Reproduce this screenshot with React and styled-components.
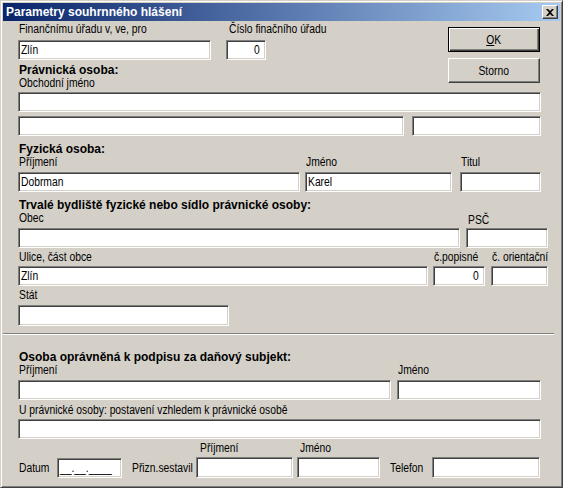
import React from "react";
import styled, { createGlobalStyle } from "styled-components";

const GlobalStyle = createGlobalStyle`
  body {
    margin: 0;
    background: #d4d0c8;
  }
`;

const uiFont = `"Liberation Sans", Arial, sans-serif`;

const Window = styled.div`
  width: 563px;
  height: 488px;
  box-sizing: border-box;
  background: #d4d0c8;
  border-top: 1px solid #d4d0c8;
  border-left: 1px solid #d4d0c8;
  border-right: 1px solid #404040;
  border-bottom: 1px solid #404040;
  box-shadow: inset 1px 1px #ffffff, inset -1px -1px #808080;
  padding: 2px;
  font-family: ${uiFont};
  font-size: 12px;
  color: #000;
  overflow: hidden;
`;

// narrow UI text (Arial Narrow look)
const Txt = styled.span`
  display: inline-block;
  white-space: nowrap;
  transform: scaleX(0.86);
  transform-origin: ${(p) => (p.$right ? "right" : p.$center ? "center" : "left")} center;
`;

const TitleBar = styled.div`
  height: 18px;
  display: flex;
  align-items: center;
  justify-content: space-between;
  padding: 0 2px 0 3px;
  background: linear-gradient(to right, #0a246a, #a6caf0);
`;

const TitleText = styled.span`
  font-weight: bold;
  font-size: 12px;
  color: #fff;
`;

const CloseBtn = styled.div`
  width: 16px;
  height: 14px;
  box-sizing: border-box;
  background: #d4d0c8;
  border-top: 1px solid #fff;
  border-left: 1px solid #fff;
  border-right: 1px solid #404040;
  border-bottom: 1px solid #404040;
  box-shadow: inset -1px -1px #808080;
  display: flex;
  align-items: center;
  justify-content: center;
`;

const Body = styled.div`
  padding: 1px 0 0 15px;
`;

const Top = styled.div`
  display: flex;
`;

const TopLeft = styled.div`
  width: 430px;
`;

const Buttons = styled.div`
  display: flex;
  flex-direction: column;
  gap: 6px;
  padding-top: 5px;
`;

const Button = styled.div`
  width: 92px;
  height: 25px;
  box-sizing: border-box;
  display: flex;
  align-items: center;
  justify-content: center;
  border-top: 1px solid ${(p) => (p.$default ? "#000" : "#fff")};
  border-left: 1px solid ${(p) => (p.$default ? "#000" : "#fff")};
  border-right: 1px solid ${(p) => (p.$default ? "#000" : "#404040")};
  border-bottom: 1px solid ${(p) => (p.$default ? "#000" : "#404040")};
  box-shadow: ${(p) =>
    p.$default
      ? "inset 1px 1px #fff, inset -1px -1px #404040, inset -2px -2px #808080"
      : "inset -1px -1px #808080"};
  u {
    text-decoration: underline;
  }
`;

const Row = styled.div`
  display: flex;
  align-items: ${(p) => p.$align || "flex-start"};
  margin-top: ${(p) => p.$mt || 0}px;
`;

const Field = styled.div`
  display: flex;
  flex-direction: column;
  width: ${(p) => p.$w}px;
  margin-left: ${(p) => p.$ml || 0}px;
  margin-top: ${(p) => p.$mt || 0}px;
`;

const Label = styled.div`
  height: 13px;
  line-height: 13px;
  white-space: nowrap;
  padding-left: ${(p) => p.$pl || 1}px;
  margin-bottom: ${(p) => (p.$mb === undefined ? 4 : p.$mb)}px;
`;

const Heading = styled.div`
  font-weight: bold;
  font-size: 12px;
  height: 13px;
  line-height: 13px;
  padding-left: 1px;
  white-space: nowrap;
  margin-top: ${(p) => p.$mt || 0}px;
`;

const Input = styled.div`
  width: ${(p) => (p.$w ? `${p.$w}px` : "100%")};
  height: ${(p) => p.$h || 20}px;
  flex-shrink: 0;
  box-sizing: border-box;
  background: #fff;
  border-top: 1px solid #808080;
  border-left: 1px solid #808080;
  border-right: 1px solid #fff;
  border-bottom: 1px solid #fff;
  box-shadow: inset 1px 1px #404040, inset -1px -1px #d4d0c8;
  padding: 0 5px 0 2px;
  display: flex;
  align-items: center;
  justify-content: ${(p) => (p.$right ? "flex-end" : "flex-start")};
  margin-left: ${(p) => p.$ml || 0}px;
  white-space: nowrap;
  overflow: hidden;
`;

const Separator = styled.div`
  height: 0;
  margin: 7px 0 0 -15px;
  width: 551px;
  border-top: 1px solid #808080;
  border-bottom: 1px solid #fff;
`;

const InlineLabel = styled.span`
  width: ${(p) => p.$w}px;
  flex-shrink: 0;
  box-sizing: border-box;
  padding-left: ${(p) => p.$pl || 1}px;
  padding-bottom: 3px;
  white-space: nowrap;
`;

export default function App() {
  return (
    <>
      <GlobalStyle />
      <Window>
        <TitleBar>
          <TitleText>Parametry souhrnného hlášení</TitleText>
          <CloseBtn>
            <svg width="8" height="7" viewBox="0 0 8 7">
              <path d="M0 0h2l2 2 2-2h2L5 3.5 8 7H6L4 5 2 7H0l3-3.5z" fill="#000" />
            </svg>
          </CloseBtn>
        </TitleBar>
        <Body>
          <Top>
            <TopLeft>
              <Row $mt={1}>
                <Field $w={193}>
                  <Label><Txt>Finančnímu úřadu v, ve, pro</Txt></Label>
                  <Input><Txt>Zlín</Txt></Input>
                </Field>
                <Field $w={40} $ml={15}>
                  <Label $pl={3}><Txt>Číslo finačního úřadu</Txt></Label>
                  <Input $right><Txt $right>0</Txt></Input>
                </Field>
              </Row>
              <Heading $mt={4}>Právnická osoba:</Heading>
              <Label $mb={2}><Txt>Obchodní jméno</Txt></Label>
            </TopLeft>
            <Buttons>
              <Button $default>
                <Txt $center>
                  <u>O</u>K
                </Txt>
              </Button>
              <Button><Txt $center>Storno</Txt></Button>
            </Buttons>
          </Top>
          <Input $w={523} />
          <Row $mt={4}>
            <Input $w={386} />
            <Input $w={129} $ml={8} />
          </Row>
          <Heading $mt={7}>Fyzická osoba:</Heading>
          <Row>
            <Field $w={282}>
              <Label $mb={3}><Txt>Příjmení</Txt></Label>
              <Input><Txt>Dobrman</Txt></Input>
            </Field>
            <Field $w={147} $ml={5}>
              <Label $mb={3}><Txt>Jméno</Txt></Label>
              <Input><Txt>Karel</Txt></Input>
            </Field>
            <Field $w={81} $ml={8}>
              <Label $mb={3}><Txt>Titul</Txt></Label>
              <Input />
            </Field>
          </Row>
          <Heading $mt={7}>Trvalé bydliště fyzické nebo sídlo právnické osoby:</Heading>
          <Row>
            <Field $w={442}>
              <Label $mb={3}><Txt>Obec</Txt></Label>
              <Input />
            </Field>
            <Field $w={82} $ml={6} $mt={2}>
              <Label $mb={1} $pl={2}><Txt>PSČ</Txt></Label>
              <Input />
            </Field>
          </Row>
          <Row $mt={3}>
            <Field $w={410}>
              <Label $mb={2}><Txt>Ulice, část obce</Txt></Label>
              <Input><Txt>Zlín</Txt></Input>
            </Field>
            <Field $w={52} $ml={5}>
              <Label $mb={2}><Txt>č.popisné</Txt></Label>
              <Input $right><Txt $right>0</Txt></Input>
            </Field>
            <Field $w={57} $ml={6}>
              <Label $mb={2}><Txt>č. orientační</Txt></Label>
              <Input />
            </Field>
          </Row>
          <Field $w={211} $mt={3}>
            <Label $mb={3}><Txt>Stát</Txt></Label>
            <Input $h={21} />
          </Field>
          <Separator />
          <Heading $mt={16}>Osoba oprávněná k podpisu za daňový subjekt:</Heading>
          <Row>
            <Field $w={373}>
              <Label $mb={3}><Txt>Příjmení</Txt></Label>
              <Input />
            </Field>
            <Field $w={144} $ml={6}>
              <Label $mb={3}><Txt>Jméno</Txt></Label>
              <Input />
            </Field>
          </Row>
          <Field $w={523} $mt={4}>
            <Label $mb={2}><Txt>U právnické osoby: postavení vzhledem k právnické osobě</Txt></Label>
            <Input />
          </Field>
          <Row $align="flex-end" $mt={3}>
            <InlineLabel $w={39}><Txt>Datum</Txt></InlineLabel>
            <Input $w={65}><Txt>__.__.____</Txt></Input>
            <InlineLabel $w={74} $pl={10}><Txt>Přizn.sestavil</Txt></InlineLabel>
            <Field $w={97}>
              <Label $mb={2} $pl={4}><Txt>Příjmení</Txt></Label>
              <Input $h={21} />
            </Field>
            <Field $w={83} $ml={4}>
              <Label $mb={2} $pl={3}><Txt>Jméno</Txt></Label>
              <Input $h={21} />
            </Field>
            <InlineLabel $w={52} $pl={10}><Txt>Telefon</Txt></InlineLabel>
            <Input $w={108} $h={21} />
          </Row>
        </Body>
      </Window>
    </>
  );
}
